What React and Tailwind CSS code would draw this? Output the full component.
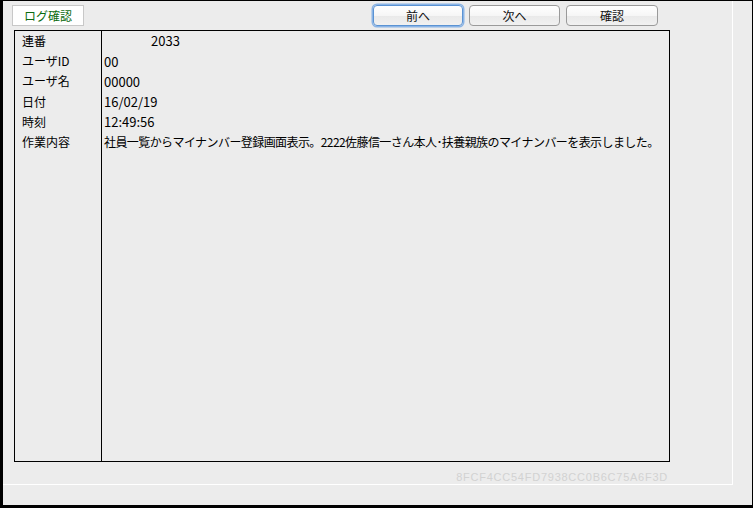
import React from "react";

const jp = { fontFamily: '"Noto Sans CJK JP", "Noto Sans", sans-serif' };

function MacButton({ children, focused }) {
  return (
    <div
      className={
        "flex h-[21px] items-center justify-center rounded-[4px] border text-[12px] leading-none text-[#111] " +
        (focused
          ? "border-[#5b93d3] shadow-[0_0_0_1.5px_#8ab4e6] bg-[linear-gradient(#ffffff,#f6f6f6_50%,#e9e9e9_51%,#f1f1f1)]"
          : "border-[#9a9a9a] bg-[linear-gradient(#ffffff,#f6f6f6_50%,#e9e9e9_51%,#f1f1f1)]")
      }
      style={jp}
    >
      {children}
    </div>
  );
}

const rows = [
  ["連番", "2033", true],
  ["ユーザID", "00"],
  ["ユーザ名", "00000"],
  ["日付", "16/02/19"],
  ["時刻", "12:49:56"],
  [
    "作業内容",
    "社員一覧からマイナンバー登録画面表示。2222佐藤信一さん本人･扶養親族のマイナンバーを表示しました。",
  ],
];

export default function App() {
  return (
    <div className="h-[508px] w-[753px] bg-black pt-[1px] pl-[3px] pr-[1px] pb-[3px]" style={jp}>
      <div className="flex h-full w-full flex-col bg-[#ececec]">
        <div className="flex h-[484px] w-[730px] flex-col border-r border-b border-white">
          <div className="mt-[4px] flex h-[21px] items-center">
            <div className="ml-[9px] flex h-[21px] w-[72px] items-center justify-center border border-[#c8c8c8] bg-white text-[12px] leading-none text-[#0b6b10]">
              ログ確認
            </div>
            <div className="ml-[289px] w-[90px]">
              <MacButton focused>前へ</MacButton>
            </div>
            <div className="ml-[6px] w-[91px]">
              <MacButton>次へ</MacButton>
            </div>
            <div className="ml-[6px] w-[92px]">
              <MacButton>確認</MacButton>
            </div>
          </div>
          <div className="ml-[11px] mt-[4px] flex h-[432px] w-[656px] border border-black">
            <div className="w-[87px] shrink-0 border-r border-black">
              {rows.map(([label]) => (
                <div key={label} className="flex h-[20.2px] items-center pl-[7px] text-[12px] text-black">
                  {label}
                </div>
              ))}
            </div>
            <div className="min-w-0 flex-1">
              {rows.map(([label, value, indent]) => (
                <div
                  key={label}
                  className={
                    "flex h-[20.2px] items-center whitespace-nowrap text-black " +
                    (indent ? "pl-[49px] text-[13px]" : "pl-[2px] text-[12px]")
                  }
                >
                  {label === "作業内容" ? (
                    <span className="tracking-[-0.58px]">{value}</span>
                  ) : (
                    <span className="text-[13px]">{value}</span>
                  )}
                </div>
              ))}
            </div>
          </div>
          <div className="ml-[11px] mt-[8px] flex h-[14px] w-[654px] justify-end">
            <span
              className="whitespace-nowrap text-[11px] leading-[14px] tracking-[0.75px] text-[#d2d2d2]"
              style={{ fontFamily: '"Liberation Sans", Arial, sans-serif' }}
            >
              8FCF4CC54FD7938CC0B6C75A6F3D
            </span>
          </div>
        </div>
      </div>
    </div>
  );
}
